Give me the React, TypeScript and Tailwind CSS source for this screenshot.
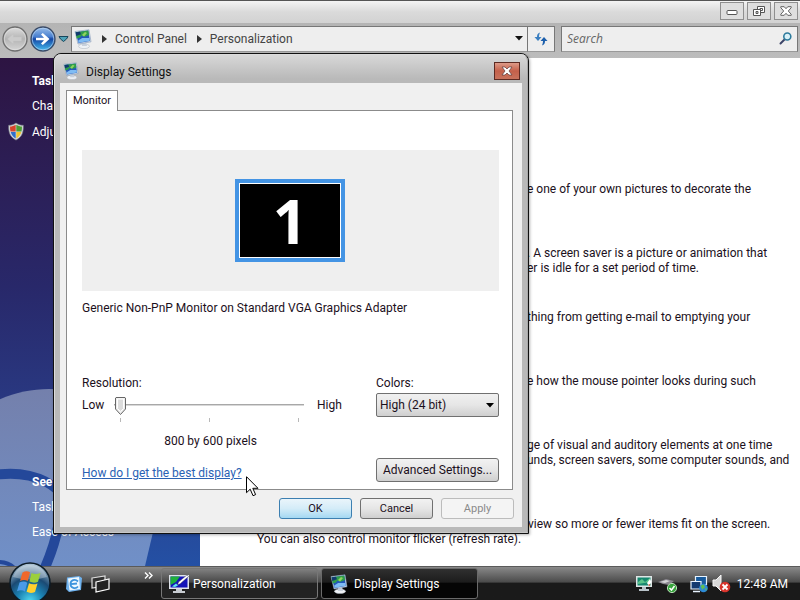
import { useState } from "react";

const descriptions = [
    ["e one of your own pictures to decorate the"],
    [". A screen saver is a picture or animation that", "er is idle for a set period of time."],
    ["thing from getting e-mail to emptying your"],
    ["e how the mouse pointer looks during such"],
    ["ge of visual and auditory elements at one time", "unds, screen savers, some computer sounds, and"],
];

const resolutions = ["800 by 600 pixels", "1024 by 768 pixels", "1280 by 1024 pixels"];

function MonitorIcon({ className }: { className?: string }) {
    return (
        <svg viewBox="0 0 18 20" className={className} aria-hidden="true">
            <ellipse cx="10" cy="17.3" rx="5.500" ry="2.300" fill="#eef1f5" stroke="#a9b0ba" strokeWidth=".5" />
            <path d="M8 13l4-.5 1 4.5H8z" fill="#c7d0dc" />
            <path d="M1 2.5L15 .8l2 12L4 15z" fill="#dce6f2" stroke="#7f95b3" strokeWidth=".6" />
            <path d="M1.700 3.200l12.600-1.600 1.600 10.300L4.500 13.900z" fill="#2458b8" />
            <path d="M1.700 3.200l12.600-1.600.8 4.500-4.500 1.600-3-1.300-2 2.300-3 .8z" fill="#2f9c4a" />
            <path d="M1.700 3.200l4.300-.5 1 2.500-4.700 1.700z" fill="#123a70" />
            <path d="M8 6l3-3 2 1-3 3.600z" fill="#8fd45f" />
            <path d="M4.200 11.500l4-2.500 7.100-.1.500 2.800-11.300 2z" fill="#7fbcf4" />
        </svg>
    );
}

function ShieldIcon() {
    return (
        <svg viewBox="0 0 16 18" className="h-[19px] w-4 shrink-0" aria-hidden="true">
            <path d="M8 .5C5.800 2.200 3.500 2.800.7 2.800.4 10 2 14.500 8 17.600 14 14.500 15.600 10 15.300 2.800 12.500 2.800 10.200 2.200 8 .5z" fill="#d7dadd" stroke="#7b7f86" strokeWidth=".6" />
            <path d="M7.700 2.300C5.800 3.500 4 4 2.100 4.100 2 6 2.100 7.400 2.500 9h5.200z" fill="#d8452b" />
            <path d="M8.300 2.300C10.200 3.500 12 4 13.900 4.100 14 6 13.900 7.400 13.500 9H8.300z" fill="#4c9e34" />
            <path d="M2.700 9.500C3.500 12.500 5 14.500 7.700 16V9.500z" fill="#2f6fc9" />
            <path d="M13.300 9.500C12.500 12.500 11 14.500 8.300 16V9.500z" fill="#f0c52e" />
        </svg>
    );
}

function NavButtons() {
    return (
        <div className="flex w-[71px] shrink-0 items-center">
            <button type="button" aria-label="Back" className="ml-0.5">
                <svg viewBox="0 0 26 26" className="size-[26px]" aria-hidden="true">
                    <defs>
                        <linearGradient id="back" x1="0" y1="0" x2="0" y2="1">
                            <stop offset="0" stopColor="#dedede" />
                            <stop offset=".5" stopColor="#b4b4b4" />
                            <stop offset="1" stopColor="#d6d6d6" />
                        </linearGradient>
                    </defs>
                    <circle cx="13" cy="13" r="12" fill="url(#back)" stroke="#6e6e6e" strokeWidth="1.300" />
                    <circle cx="13" cy="13" r="10.700" fill="none" stroke="#e4e4e4" strokeWidth=".6" />
                    <path d="M5.500 13l6-5.500v3.500h8v4h-8v3.500z" fill="#cbcbcb" stroke="#c0c0c0" strokeWidth=".5" />
                </svg>
            </button>
            <button type="button" aria-label="Forward" className="ml-0.5">
                <svg viewBox="0 0 26 26" className="size-[26px]" aria-hidden="true">
                    <defs>
                        <linearGradient id="fwd" x1="0" y1="0" x2="0" y2="1">
                            <stop offset="0" stopColor="#9cc0ea" />
                            <stop offset=".4" stopColor="#4a80d0" />
                            <stop offset=".5" stopColor="#1446a4" />
                            <stop offset="1" stopColor="#48c0f2" />
                        </linearGradient>
                    </defs>
                    <circle cx="13" cy="13" r="12" fill="url(#fwd)" stroke="#3a4a66" strokeWidth="1.300" />
                    <circle cx="13" cy="13" r="10.800" fill="none" stroke="#b5d3f2" strokeWidth=".7" />
                    <path d="M6 11.700h8L11 8.500l1.800-1.500 6.700 6-6.700 6-1.800-1.500 3-3.200H6z" fill="#fff" />
                </svg>
            </button>
            <button type="button" aria-label="Recent pages" className="ml-0.5">
                <svg viewBox="0 0 11 8" className="h-2 w-[11px]" aria-hidden="true">
                    <path d="M1 1.500h9L8.500 4 5.500 6.500 2.500 4z" fill="#4fa3b8" stroke="#17465c" />
                </svg>
            </button>
        </div>
    );
}

function Explorer() {
    return (
        <div className="flex flex-1 flex-col">
            <header className="flex h-[23px] items-start justify-end gap-[3px] border-t border-[#555] bg-linear-to-b from-[#f4f4f4] via-[#dadada] to-[#d2d2d2] pt-px pr-0.5">
                <button type="button" aria-label="Minimize" className="flex h-[18px] w-6 items-center justify-center border border-[#8f8f8f] bg-[#dedede]">
                    <svg viewBox="0 0 12 10" className="h-2.5 w-3" aria-hidden="true">
                        <rect x="1" y="4.500" width="10" height="4" rx="1" fill="#fff" stroke="#555" />
                    </svg>
                </button>
                <button type="button" aria-label="Restore" className="flex h-[18px] w-6 items-center justify-center border border-[#8f8f8f] bg-[#dedede]">
                    <svg viewBox="0 0 12 12" className="size-3" aria-hidden="true">
                        <path d="M4.500 1.500h7v6h-7zM7 3.500h2.500v2H7z" fill="#fff" stroke="#555" />
                        <path d="M.5 4.500h7v6h-7z" fill="#fff" stroke="#555" />
                        <path d="M3 6.500h2v2H3z" fill="#ddd" stroke="#555" />
                    </svg>
                </button>
                <button type="button" aria-label="Close" className="flex h-[18px] w-6 items-center justify-center border border-[#8f8f8f] bg-[#dedede]">
                    <svg viewBox="0 0 12 10" className="h-2.5 w-3" aria-hidden="true">
                        <path d="M.8.700h3.400L6 2.700 7.800.700h3.400v1L8.300 5l2.900 3.300v1H7.800L6 7.300l-1.800 2H.8v-1L3.700 5 .8 1.700z" fill="#fff" stroke="#555" strokeWidth=".9" />
                    </svg>
                </button>
            </header>

            <nav className="flex h-[35px] items-center bg-linear-to-b from-[#b4b4b4] to-[#bcbcbc] pb-1">
                <NavButtons />
                <div className="flex h-[26px] flex-1 items-center border border-[#777] border-b-[#999] bg-[#eee]">
                    <MonitorIcon className="ml-0.5 h-5 w-[18px]" />
                    <svg viewBox="0 0 5 8" className="ml-2.5 h-2 w-[5px]" aria-hidden="true"><path d="M0 0l5 4-5 4z" fill="#333" /></svg>
                    <a href="#control-panel" className="ml-2 text-[#444]">Control Panel</a>
                    <svg viewBox="0 0 5 8" className="ml-2.5 h-2 w-[5px]" aria-hidden="true"><path d="M0 0l5 4-5 4z" fill="#333" /></svg>
                    <a href="#personalization" className="ml-2 text-[#444]">Personalization</a>
                    <button type="button" aria-label="Previous locations" className="mr-1 ml-auto">
                        <svg viewBox="0 0 8 5" className="h-[5px] w-2" aria-hidden="true"><path d="M0 0h8L4 4.500z" fill="#111" /></svg>
                    </button>
                </div>
                <button type="button" aria-label="Refresh" className="flex h-[26px] w-[27px] items-center justify-center border border-l-0 border-[#777] border-b-[#999] bg-[#eee]">
                    <svg viewBox="0 0 14 14" className="size-3.5" aria-hidden="true">
                        <path d="M6 .5C3.500 1 3 3 3 5H.5L4 9l3.500-4H5C5 3 5.500 2 6 .5z" fill="#3c7fc0" />
                        <path d="M8 13.500c2.500-.5 3-2.500 3-4.500h2.500L10 5 6.500 9H9c0 2-.5 3-1 4.500z" fill="#1c5fac" />
                    </svg>
                </button>
                <form className="mr-0.5 ml-[6px] flex h-[26px] w-[237px] items-center border border-[#777] border-b-[#999] bg-[#eee] px-[5px]">
                    <input type="search" aria-label="Search" placeholder="Search" className="min-w-0 flex-1 font-['Open_Sans',sans-serif] italic outline-none placeholder:text-[#666]" />
                    <svg viewBox="0 0 13 13" className="size-[13px]" aria-hidden="true">
                        <path d="M1.500 11.500L6 7" stroke="#3b4468" strokeWidth="2" strokeLinecap="round" />
                        <circle cx="8.300" cy="4.500" r="3.500" fill="#d8f0f8" stroke="#2c7a9c" strokeWidth="1.600" />
                    </svg>
                </form>
            </nav>

            <div className="flex flex-1 bg-white">
                <aside className="relative w-[200px] shrink-0 overflow-hidden bg-linear-to-b from-[#2d1442] via-[#28286a] via-45% to-[#2450a4] text-white">
                    <svg viewBox="0 0 200 508" className="absolute inset-0 h-full w-full" preserveAspectRatio="none" aria-hidden="true">
                        <defs>
                            <linearGradient id="swirl" x1="0" y1="0" x2="0" y2="1">
                                <stop offset="0" stopColor="#7480ac" />
                                <stop offset="1" stopColor="#7090c8" />
                            </linearGradient>
                        </defs>
                        <path d="M-40 370C0 325 70 320 110 350 140 375 155 420 154 470L145 508H-40z" fill="url(#swirl)" />
                        <path d="M-5 417C18 413 42 418 58 432 64 450 58 480 44 512" fill="none" stroke="#24489a" strokeWidth="10" />
                        <path d="M-2 504q12 0 18 8" fill="none" stroke="#24489a" strokeWidth="4" />
                    </svg>
                    <div className="relative flex h-[508px] flex-col">
                        <h2 className="mt-3.5 ml-8 leading-[18px] font-bold">Tasks</h2>
                        <a href="#icons" className="mt-[7px] ml-8 leading-[18px]">Change</a>
                        <div className="mt-[7px] ml-2 flex items-center gap-2">
                            <ShieldIcon />
                            <a href="#dpi" className="leading-[18px]">Adjust</a>
                        </div>
                        <h2 className="mt-auto ml-8 leading-[18px] font-bold">See also</h2>
                        <a href="#taskbar" className="mt-[7px] ml-8 leading-[18px]">Taskbar</a>
                        <a href="#ease" className="mt-[7px] mb-[25px] ml-8 leading-[18px]">Ease of Access</a>
                    </div>
                </aside>
                <main className="min-w-0 flex-1 pt-[124px] pl-[57px] leading-[15px] text-[#201020]">
                    <div className="ml-[270px] flex flex-col gap-[34px]">
                        {descriptions.map((lines) => (
                            <div key={lines[0]} className="min-h-[30px]">
                                {lines.map((line) => (
                                    <p key={line} className="whitespace-nowrap">{line}</p>
                                ))}
                            </div>
                        ))}
                    </div>
                    <p className="mt-[49px] ml-[271px] whitespace-nowrap">view so more or fewer items fit on the screen.</p>
                    <p>You can also control monitor flicker (refresh rate).</p>
                </main>
            </div>
        </div>
    );
}

function DisplayDialog() {
    const [level, setLevel] = useState(0);

    return (
        <div role="dialog" aria-label="Display Settings" className="absolute top-[53px] left-[53px] w-[476px] rounded-t-lg border border-[#111] bg-[#b9b9b9] shadow-[1px_1px_3px_rgba(0,0,0,0.3)]">
            <div className="rounded-t-[7px] border border-[#dcdcdc] border-r-[#a8a8a8] border-b-[#c8c8c8] bg-linear-to-b from-[#d8d8d8] to-[#b9b9b9] to-5% px-[5px] pb-[5px]">
                <header className="flex h-7 items-center pt-1 pl-[3px]">
                    <MonitorIcon className="h-[18px] w-4" />
                    <h1 className="ml-[7px] pt-0.5 text-[#111]">Display Settings</h1>
                    <button type="button" aria-label="Close" className="mr-0.5 ml-auto flex h-[18px] w-[26px] items-center justify-center border border-[#5c2a22] bg-linear-to-b from-[#dd9a88] via-[#c4604a] to-[#c8725c]">
                        <svg viewBox="0 0 12 10" className="h-2.5 w-3" aria-hidden="true">
                            <path d="M1 1h3l2 2 2-2h3L8 5l3 4H8L6 7 4 9H1l3-4z" fill="#fff" stroke="#5b3a3a" strokeWidth=".7" />
                        </svg>
                    </button>
                </header>

                <div className="bg-[#f0f0f0] px-1.5 pt-[7px] pb-2">
                    <div role="tablist" className="flex">
                        <button type="button" role="tab" aria-selected="true" className="relative z-10 -mb-px h-[21px] w-[52px] border border-b-0 border-[#8b8b8b] bg-white text-[11px]">Monitor</button>
                    </div>
                    <div role="tabpanel" className="mr-[3px] border border-[#8b8b8b] bg-white pt-[39px] pr-[13px] pb-[7px] pl-[15px]">
                        <div className="flex h-[141px] items-center justify-center bg-[#efefef] pr-px">
                            <div className="flex h-[83px] w-[110px] items-center justify-center border-4 border-[#4494e4] bg-black font-['Open_Sans',sans-serif] text-[60px] leading-none font-bold text-white outline-1 -outline-offset-5 outline-white">
                                1
                            </div>
                        </div>
                        <p className="mt-2 leading-[18px]">Generic Non-PnP Monitor on Standard VGA Graphics Adapter</p>

                        <div className="mt-[57px] flex justify-between">
                            <div className="w-[265px]">
                                <label htmlFor="resolution" className="block leading-[18px]">Resolution:</label>
                                <div className="mt-1 flex items-start leading-[18px]">
                                    <span className="w-[30px]">Low</span>
                                    <div className="relative h-[26px] w-[195px]">
                                        <svg viewBox="0 0 195 26" className="h-[26px] w-[195px]" aria-hidden="true">
                                            <path d="M2 8.500h190" stroke="#a8a8a8" />
                                            <path d="M2 9.500h190" stroke="#d8d8d8" />
                                            <path d="M8.500 22v4M97.500 22v4M186.500 22v4" stroke="#b8b8b8" />
                                            <g transform={`translate(${level * 89} 0)`}>
                                                <path d="M4 1.500h9l.5.5v11L8.500 18.500 3.500 13V2z" fill="#eee" stroke="#666" />
                                                <path d="M5.500 3h6v9.500l-3 3-3-3z" fill="#dcdcdc" stroke="#fff" />
                                            </g>
                                        </svg>
                                        <input
                                            id="resolution"
                                            type="range"
                                            min={0}
                                            max={2}
                                            value={level}
                                            onChange={(e) => setLevel(Number(e.target.value))}
                                            className="absolute inset-0 w-full opacity-0"
                                        />
                                    </div>
                                    <span className="ml-2.5">High</span>
                                </div>
                                <output htmlFor="resolution" className="mt-2.5 block pr-2 text-center leading-[18px]">{resolutions[level]}</output>
                                <a href="#help" className="mt-3.5 inline-block leading-[18px] text-[#2a62b4] underline">How do I get the best display?</a>
                            </div>

                            <div className="w-[123px]">
                                <label htmlFor="colors" className="block leading-[18px]">Colors:</label>
                                <div className="relative mt-px">
                                    <select id="colors" className="h-6 w-full appearance-none rounded-[2px] border border-[#707070] bg-linear-to-b from-[#f0f0f0] via-[#e6e6e6] to-[#cfcfcf] pl-[3px]">
                                        <option>High (24 bit)</option>
                                        <option>Medium (16 bit)</option>
                                    </select>
                                    <svg viewBox="0 0 8 5" className="pointer-events-none absolute top-2.5 right-[5px] h-[5px] w-2" aria-hidden="true"><path d="M0 0h8L4 4.500z" fill="#000" /></svg>
                                </div>
                                <button type="button" className="mt-[41px] h-6 w-full rounded-[3px] border border-[#707070] bg-linear-to-b from-[#f2f2f2] via-[#e6e6e6] to-[#cfcfcf] whitespace-nowrap">Advanced Settings...</button>
                            </div>
                        </div>
                    </div>
                    <footer className="mt-2 mr-0.5 flex justify-end gap-2">
                        <button type="button" className="h-[21px] w-[73px] rounded-[3px] border border-[#3c7fb1] bg-linear-to-b from-[#eaf5fb] via-[#d4ecf8] to-[#a4d8f2] text-[11px]">OK</button>
                        <button type="button" className="h-[21px] w-[73px] rounded-[3px] border border-[#707070] bg-linear-to-b from-[#f2f2f2] via-[#e6e6e6] to-[#cfcfcf] text-[11px]">Cancel</button>
                        <button type="button" disabled className="h-[21px] w-[73px] rounded-[3px] border border-[#bcbcbc] bg-[#f4f4f4] text-[11px] text-[#8a8a8a]">Apply</button>
                    </footer>
                </div>
            </div>
        </div>
    );
}

function StartOrb() {
    return (
        <svg viewBox="0 0 42 40" className="-mt-1 h-10 w-[42px]" aria-hidden="true">
            <defs>
                <radialGradient id="orb" cx=".5" cy=".95" r=".9">
                    <stop offset="0" stopColor="#4fd8f0" />
                    <stop offset=".35" stopColor="#1b83b4" />
                    <stop offset=".65" stopColor="#1b4a74" />
                    <stop offset="1" stopColor="#a8bfd0" />
                </radialGradient>
            </defs>
            <circle cx="21" cy="21" r="20" fill="url(#orb)" stroke="#0c1b26" strokeWidth="1.500" />
            <path d="M4 15a18 18 0 0134 0q-17 5-34 0z" fill="#fff" opacity=".3" />
            <path d="M13.500 10.500q4-2.500 7.500-.2l-2.200 8.700q-3.500-2-7.800 0z" fill="#f0682c" />
            <path d="M22.500 11q4 2 9 0l-2.500 8.700q-4 2-8.600-.2z" fill="#9bcf3c" />
            <path d="M10.500 20.500q4.500-2 7.800.2l-2.400 8.800q-3.500-2.200-7.900-.2z" fill="#4a9ae8" />
            <path d="M20 21.200q3.900 2.200 8.500.2l-2.500 8.600q-4.300 2-8.400-.2z" fill="#ffd02e" />
        </svg>
    );
}

function Taskbar() {
    return (
        <footer className="relative flex h-[34px] items-center border-t border-[#5a5a5a] bg-linear-to-b from-[#8a8a8a] via-[#4c4c4c] via-45% to-[#1a1a1a] to-50% text-white">
            <button type="button" aria-label="Start" className="ml-[9px]"><StartOrb /></button>
            <button type="button" aria-label="Internet Explorer" className="ml-3.5">
                <svg viewBox="0 0 18 18" className="size-[18px]" aria-hidden="true">
                    <path d="M2 2.500L14 1l3 2-1 12-12 2-3-3z" fill="#6fb2ee" />
                    <path d="M3 3.500L14 2l1 12-10.500 1.500z" fill="#eef8ff" />
                    <path d="M13 6.500C10 3.500 5.500 5 5.500 9s5 5.500 7.500 2.500M6 9.200l6-.7" fill="none" stroke="#3c94de" strokeWidth="1.800" />
                </svg>
            </button>
            <button type="button" aria-label="Switch between windows" className="ml-2">
                <svg viewBox="0 0 20 20" className="size-5" aria-hidden="true">
                    <path d="M1 4l13-2v10L1 14z" fill="#333" stroke="#ddd" strokeWidth="1.200" />
                    <path d="M5 8l13-3v10L5 18z" fill="#222" stroke="#fff" strokeWidth="1.200" />
                </svg>
            </button>
            <button type="button" aria-label="More" className="mb-4 ml-[33px]">
                <svg viewBox="0 0 9 7" className="h-[7px] w-[9px]" aria-hidden="true">
                    <path d="M1 .5l3 3-3 3M5 .5l3 3-3 3" fill="none" stroke="#fff" strokeWidth="1.400" />
                </svg>
            </button>
            <button type="button" className="ml-2 flex h-[31px] w-[157px] items-center rounded-[3px] border border-[#777] bg-linear-to-b from-[#808080] via-[#484848] via-45% to-[#222] to-50% pl-[7px]">
                <svg viewBox="0 0 20 20" className="size-5" aria-hidden="true">
                    <path d="M0 1h20v14H0z" fill="#dfe4ea" />
                    <path d="M1.500 2.500h17v11h-17z" fill="#1414b8" />
                    <path d="M1.500 2.500H11L7 8l-5.500 3z" fill="#1dae3b" />
                    <path d="M18 1l1.500 1.500-8 7-3 1.500 1-3z" fill="#fff" stroke="#223" strokeWidth=".4" />
                    <path d="M3 12.500l4-3 2 2-3 1.500z" fill="#5fe0f0" />
                    <path d="M7 15h6v2H7zM4 17h12v2H4z" fill="#c8ccd2" />
                </svg>
                <span className="ml-1">Personalization</span>
            </button>
            <button type="button" className="ml-[3px] flex h-[31px] w-[157px] items-center rounded-[3px] border border-[#6a6a6a] bg-linear-to-b from-[#303030] via-[#1c1c1c] via-45% to-[#050505] to-50% pl-2">
                <MonitorIcon className="h-5 w-[18px]" />
                <span className="ml-1.5">Display Settings</span>
            </button>

            <div className="mr-3 ml-auto flex items-center">
                <svg viewBox="0 0 18 18" className="size-[18px]" aria-hidden="true">
                    <path d="M1 1h16v11H1z" fill="#dfe6e6" />
                    <path d="M2.500 2.500h13v8h-13z" fill="#17876f" />
                    <path d="M3 7l4-3 3 3 5-4v4l-12 2z" fill="#5cc48a" />
                    <path d="M12 8l3-4 1.500 3-2.500 4z" fill="#fff" />
                    <path d="M13.500 9l2 .5-1.500 2z" fill="#d05030" />
                    <path d="M7 12h4v2H7zM4 14h10v2H4z" fill="#b8c2c8" />
                </svg>
                <svg viewBox="0 0 20 18" className="ml-[5px] h-[18px] w-5" aria-hidden="true">
                    <path d="M0 7l8-3 8 2-5 4-6-1z" fill="#8b8790" />
                    <path d="M2 7l6-2 4 1-5 2z" fill="#d5d5d8" />
                    <circle cx="14" cy="13" r="4.600" fill="#36a33c" stroke="#b9dfb8" />
                    <path d="M11.500 13l2 2 3-4" fill="none" stroke="#fff" strokeWidth="1.500" />
                </svg>
                <svg viewBox="0 0 18 18" className="ml-3 size-[18px]" aria-hidden="true">
                    <path d="M5.500 1.500h11v8h-11z" fill="#175a9c" stroke="#e7f3ff" strokeWidth="1.200" />
                    <path d="M1 6.500h10v7.500H1z" fill="#123a70" stroke="#e7f3ff" strokeWidth="1.200" />
                    <path d="M3 16.500h7" stroke="#e7f3ff" strokeWidth="1.500" />
                    <circle cx="13.500" cy="13" r="4.300" fill="#2c8ad8" />
                    <path d="M10.500 11q3-3 4 0t-1 2q-1 3-2 0zM15 14l2-1-1 3z" fill="#63c04f" />
                </svg>
                <svg viewBox="0 0 20 20" className="ml-1 size-5" aria-hidden="true">
                    <path d="M1 6h3l5-5v16l-5-5H1z" fill="#d8d8d8" stroke="#f6f6f6" />
                    <circle cx="13" cy="13" r="5.300" fill="#d8342c" />
                    <path d="M10.500 10.500l5 5M15.500 10.500l-5 5" stroke="#fff" strokeWidth="1.800" />
                </svg>
                <time className="ml-[5px]">12:48 AM</time>
            </div>
        </footer>
    );
}

export default function App() {
    return (
        <div className="relative flex min-h-screen flex-col overflow-hidden bg-white font-[Roboto,'Open_Sans',sans-serif] text-[12px] leading-[18px] text-[#1c101c]">
            <Explorer />
            <Taskbar />
            <DisplayDialog />

            {/* Mouse pointer */}
            <svg viewBox="0 0 13 21" className="pointer-events-none absolute top-[476px] left-[246px] h-[21px] w-[13px]" aria-hidden="true">
                <path d="M.5.700v16l3.700-3.500 2.800 6.500 2.600-1.100-2.800-6.300h5.200z" fill="#fff" stroke="#000" />
            </svg>
        </div>
    );
}
